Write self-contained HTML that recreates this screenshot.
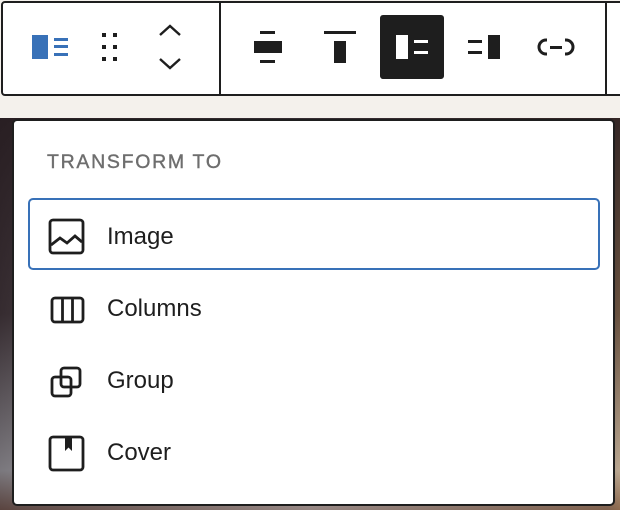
<!DOCTYPE html>
<html><head><meta charset="utf-8"><style>
html,body{margin:0;padding:0}
body{width:620px;height:510px;position:relative;overflow:hidden;background:#f4f1ec;font-family:"Liberation Sans",Arial,sans-serif}
.photo{position:absolute;left:0;top:118px;width:620px;height:392px;background:linear-gradient(90deg,#2c2226 0%,#3a3033 3%,#bfc3c8 50%,#8a6a48 98%,#b0834c 100%)}
.photo2{position:absolute;left:0;top:118px;width:620px;height:392px;background:linear-gradient(180deg,rgba(40,30,34,0.9) 0%,rgba(60,50,55,0.6) 50%,rgba(200,205,212,0.5) 90%,rgba(120,90,80,.6) 100%)}
.tb{position:absolute;left:1px;top:1px;width:640px;height:91px;border:2px solid #1e1e1e;border-radius:4px;background:#fff;box-sizing:content-box}
.sep{position:absolute;top:0;width:2px;height:91px;background:#1e1e1e}
.pop{position:absolute;left:12px;top:119px;width:599px;height:383px;border:2px solid #1e1e1e;border-radius:5px;background:#fff}
.hd{position:absolute;left:33px;top:30px;font-size:19.5px;letter-spacing:1.7px;color:#6e6e6e;-webkit-text-stroke:0.4px #6e6e6e}
.row{position:absolute;left:14px;width:572px;height:72px}
.row .t{position:absolute;left:79px;top:23px;font-size:24px;color:#1e1e1e}
.sel .t{left:77px}
.row svg{position:absolute;left:20px;top:18px}
.sel{border:2px solid #3871b8;border-radius:5px;box-sizing:border-box}
</style></head><body>
<div class="photo"></div><div class="photo2"></div>
<div class="tb">
 <div class="sep" style="left:216px"></div>
 <div class="sep" style="left:602px"></div>
</div>
<svg style="position:absolute;left:0;top:0" width="620" height="94">
 <rect x="32" y="35" width="16" height="24" fill="#3871b8"/>
 <rect x="54" y="38" width="14" height="3" fill="#3871b8"/>
 <rect x="54" y="45" width="14" height="3" fill="#3871b8"/>
 <rect x="54" y="53" width="14" height="3" fill="#3871b8"/>
 <g fill="#1e1e1e">
  <rect x="102" y="33" width="4" height="4"/><rect x="113" y="33" width="4" height="4"/>
  <rect x="102" y="45" width="4" height="4"/><rect x="113" y="45" width="4" height="4"/>
  <rect x="102" y="57" width="4" height="4"/><rect x="113" y="57" width="4" height="4"/>
 </g>
 <path d="M160 35 L170 26 L180 35 M160 59 L170 68 L180 59" stroke="#1e1e1e" stroke-width="2.4" fill="none"/>
 <g fill="#1e1e1e">
  <rect x="260" y="31" width="15" height="3"/><rect x="254" y="41" width="28" height="12"/><rect x="260" y="60" width="15" height="3"/>
  <rect x="324" y="31" width="32" height="3"/><rect x="334" y="41" width="12" height="22"/>
  <rect x="380" y="15" width="64" height="64" rx="3"/>
  <rect x="468" y="40" width="14" height="3"/><rect x="468" y="51" width="14" height="3"/><rect x="488" y="35" width="12" height="24"/>
 </g>
 <g fill="#fff"><rect x="396" y="35" width="12" height="24"/><rect x="414" y="40" width="14" height="3"/><rect x="414" y="51" width="14" height="3"/></g>
 <path d="M547 40 h-1 a7 7 0 0 0 0 14 h1 M565 40 h1 a7 7 0 0 1 0 14 h-1" stroke="#1e1e1e" stroke-width="3" fill="none"/>
 <rect x="550" y="46" width="12" height="3" fill="#1e1e1e"/>
</svg>
<div class="pop">
 <div class="hd">TRANSFORM TO</div>
 <div class="row sel" style="top:77px">
  <svg width="38" height="38" viewBox="0 0 38 38" style="left:18px;top:18px"><rect x="2" y="2" width="33" height="33" rx="3" fill="none" stroke="#1e1e1e" stroke-width="2.8"/><path d="M3 27 L12 20 L19 25 L27 18 L34 24" fill="none" stroke="#1e1e1e" stroke-width="2.8"/></svg>
  <div class="t">Image</div>
 </div>
 <div class="row" style="top:151px">
  <svg width="38" height="38" viewBox="0 0 38 38" style="left:22px;top:24px"><rect x="2" y="2" width="31" height="24" rx="3" fill="none" stroke="#1e1e1e" stroke-width="2.8"/><path d="M12.5 2 V26 M22.5 2 V26" stroke="#1e1e1e" stroke-width="2.8"/></svg>
  <div class="t">Columns</div>
 </div>
 <div class="row" style="top:223px">
  <svg width="38" height="38" viewBox="0 0 38 38" style="left:22px;top:22px"><rect x="2" y="11" width="19" height="19" rx="3" fill="none" stroke="#1e1e1e" stroke-width="2.8"/><rect x="11" y="2" width="19" height="19" rx="3" fill="none" stroke="#1e1e1e" stroke-width="2.8"/></svg>
  <div class="t">Group</div>
 </div>
 <div class="row" style="top:295px">
  <svg width="38" height="38" viewBox="0 0 38 38" style="left:20px;top:19px"><rect x="2" y="2" width="33" height="33" rx="3" fill="none" stroke="#1e1e1e" stroke-width="2.8"/><path d="M17 2 H24 V16 L20.5 12.5 L17 16 Z" fill="#1e1e1e"/></svg>
  <div class="t">Cover</div>
 </div>
</div>
</body></html>
